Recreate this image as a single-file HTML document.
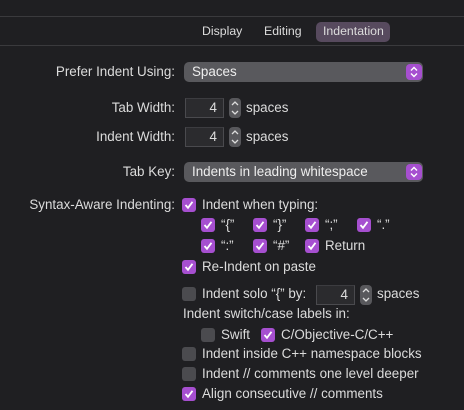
<!DOCTYPE html>
<html><head><style>
body{margin:0;width:464px;height:410px;background:#1f1f22;font-family:"Liberation Sans",sans-serif;font-size:13.4px;color:#dcdcdc;position:relative;overflow:hidden}
.a{position:absolute;white-space:nowrap;line-height:16px}
.r{text-align:right;right:289px}
.hl{position:absolute;left:0;width:464px;height:1px;background:#3a3a3d}
.cb{position:absolute;width:14px;height:14px;border-radius:3px;background:#a64fd0}
.cb svg{position:absolute;left:2px;top:2px}
.un{background:#4b4b4f}
.pop{position:absolute;left:184px;width:239px;height:20px;background:#59595d;border-radius:5px}
.pop span{position:absolute;left:8px;top:2px;color:#eee}
.pb{position:absolute;right:1px;top:2px;width:16px;height:16px;border-radius:4px;background:#a64fd0}
.fld{position:absolute;width:37px;height:18px;background:#2b2b2e;border:1px solid #4a4a4e;border-top-color:#3c3c40}
.fld span{position:absolute;right:6px;top:1px}
.st{position:absolute;width:12px;height:20px;border-radius:4px;background:#58585c}
</style></head><body>
<div class="hl" style="top:16px"></div>
<div class="hl" style="top:45px"></div>
<div class="a" style="left:202px;top:23px;font-size:12.3px">Display</div>
<div class="a" style="left:264px;top:23px;font-size:12.3px">Editing</div>
<div style="position:absolute;left:316px;top:22px;width:74px;height:20px;border-radius:5px;background:#574a5e"></div>
<div class="a" style="left:323px;top:23px;font-size:12.3px">Indentation</div>

<div class="a r" style="top:64px">Prefer Indent Using:</div>
<div class="pop" style="top:62px"><span>Spaces</span><div class="pb"><svg width="16" height="16"><path d="M5 6.5L8 3.5L11 6.5M5 9.5L8 12.5L11 9.5" stroke="#fff" stroke-width="1.4" fill="none"/></svg></div></div>

<div class="a r" style="top:100px">Tab Width:</div>
<div class="fld" style="left:185px;top:98px"><span>4</span></div>
<div class="st" style="left:229px;top:98px"><svg width="12" height="20"><path d="M3 7L6 4L9 7M3 13L6 16L9 13" stroke="#ddd" stroke-width="1.3" fill="none"/></svg></div>
<div class="a" style="left:246px;top:100px">spaces</div>

<div class="a r" style="top:129px">Indent Width:</div>
<div class="fld" style="left:185px;top:127px"><span>4</span></div>
<div class="st" style="left:229px;top:127px"><svg width="12" height="20"><path d="M3 7L6 4L9 7M3 13L6 16L9 13" stroke="#ddd" stroke-width="1.3" fill="none"/></svg></div>
<div class="a" style="left:246px;top:129px">spaces</div>

<div class="a r" style="top:164px">Tab Key:</div>
<div class="pop" style="top:162px"><span>Indents in leading whitespace</span><div class="pb"><svg width="16" height="16"><path d="M5 6.5L8 3.5L11 6.5M5 9.5L8 12.5L11 9.5" stroke="#fff" stroke-width="1.4" fill="none"/></svg></div></div>

<div class="a r" style="top:197px">Syntax-Aware Indenting:</div>
<div class="cb" style="left:182px;top:198px"><svg width="10" height="10"><path d="M1.5 5L4 7.8L8.5 1.8" stroke="#fff" stroke-width="1.8" fill="none"/></svg></div>
<div class="a" style="left:202px;top:197px">Indent when typing:</div>

<div class="cb" style="left:201px;top:218px"><svg width="10" height="10"><path d="M1.5 5L4 7.8L8.5 1.8" stroke="#fff" stroke-width="1.8" fill="none"/></svg></div>
<div class="a" style="left:221px;top:217px">“{”</div>
<div class="cb" style="left:253px;top:218px"><svg width="10" height="10"><path d="M1.5 5L4 7.8L8.5 1.8" stroke="#fff" stroke-width="1.8" fill="none"/></svg></div>
<div class="a" style="left:273px;top:217px">“}”</div>
<div class="cb" style="left:305px;top:218px"><svg width="10" height="10"><path d="M1.5 5L4 7.8L8.5 1.8" stroke="#fff" stroke-width="1.8" fill="none"/></svg></div>
<div class="a" style="left:325px;top:217px">“;”</div>
<div class="cb" style="left:357px;top:218px"><svg width="10" height="10"><path d="M1.5 5L4 7.8L8.5 1.8" stroke="#fff" stroke-width="1.8" fill="none"/></svg></div>
<div class="a" style="left:377px;top:217px">“.”</div>

<div class="cb" style="left:201px;top:239px"><svg width="10" height="10"><path d="M1.5 5L4 7.8L8.5 1.8" stroke="#fff" stroke-width="1.8" fill="none"/></svg></div>
<div class="a" style="left:221px;top:238px">“:”</div>
<div class="cb" style="left:253px;top:239px"><svg width="10" height="10"><path d="M1.5 5L4 7.8L8.5 1.8" stroke="#fff" stroke-width="1.8" fill="none"/></svg></div>
<div class="a" style="left:273px;top:238px">“#”</div>
<div class="cb" style="left:305px;top:239px"><svg width="10" height="10"><path d="M1.5 5L4 7.8L8.5 1.8" stroke="#fff" stroke-width="1.8" fill="none"/></svg></div>
<div class="a" style="left:325px;top:238px">Return</div>

<div class="cb" style="left:182px;top:260px"><svg width="10" height="10"><path d="M1.5 5L4 7.8L8.5 1.8" stroke="#fff" stroke-width="1.8" fill="none"/></svg></div>
<div class="a" style="left:202px;top:259px">Re-Indent on paste</div>

<div class="cb un" style="left:182px;top:287px"></div>
<div class="a" style="left:202px;top:286px">Indent solo “{” by:</div>
<div class="fld" style="left:316px;top:285px"><span>4</span></div>
<div class="st" style="left:360px;top:285px"><svg width="12" height="20"><path d="M3 7L6 4L9 7M3 13L6 16L9 13" stroke="#ddd" stroke-width="1.3" fill="none"/></svg></div>
<div class="a" style="left:377px;top:286px">spaces</div>

<div class="a" style="left:183px;top:306px">Indent switch/case labels in:</div>
<div class="cb un" style="left:201px;top:328px"></div>
<div class="a" style="left:221px;top:327px">Swift</div>
<div class="cb" style="left:261px;top:328px"><svg width="10" height="10"><path d="M1.5 5L4 7.8L8.5 1.8" stroke="#fff" stroke-width="1.8" fill="none"/></svg></div>
<div class="a" style="left:281px;top:327px">C/Objective-C/C++</div>

<div class="cb un" style="left:182px;top:347px"></div>
<div class="a" style="left:202px;top:346px">Indent inside C++ namespace blocks</div>
<div class="cb un" style="left:182px;top:367px"></div>
<div class="a" style="left:202px;top:366px">Indent // comments one level deeper</div>
<div class="cb" style="left:182px;top:387px"><svg width="10" height="10"><path d="M1.5 5L4 7.8L8.5 1.8" stroke="#fff" stroke-width="1.8" fill="none"/></svg></div>
<div class="a" style="left:202px;top:386px">Align consecutive // comments</div>
</body></html>
